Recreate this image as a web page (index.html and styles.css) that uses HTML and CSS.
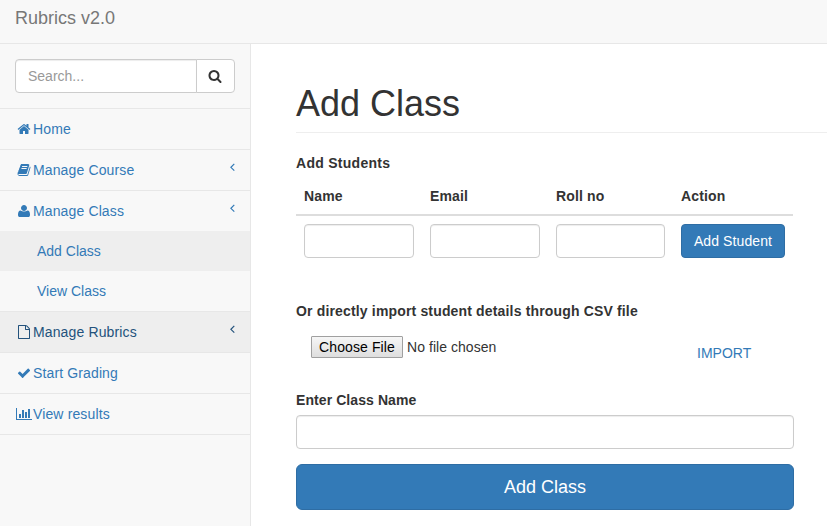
FILE: index.html
```html
<!DOCTYPE html>
<html lang="en">
<head>
<meta charset="utf-8">
<title>Rubrics v2.0</title>
<link rel="stylesheet" href="styles.css">
</head>
<body>
<header class="navbar"><a class="brand">Rubrics v2.0</a></header>
<div class="layout">
  <nav class="sidebar">
    <div class="search">
      <input class="search-input" type="text" placeholder="Search...">
      <button class="search-btn" aria-label="Search"><svg class="icon" viewBox="0 0 1792 1792"><path d="M1216 832q0-185-131.500-316.500t-316.500-131.500-316.500 131.500-131.500 316.500 131.500 316.500 316.500 131.500 316.500-131.500 131.500-316.500zm512 832q0 52-38 90t-90 38q-54 0-90-38l-343-342q-179 124-399 124-143 0-273.500-55.500t-225-150-150-225-55.500-273.500 55.500-273.500 150-225 225-150 273.500-55.500 273.500 55.500 225 150 150 225 55.500 273.500q0 220-124 399l343 343q37 37 37 90z"/></svg></button>
    </div>
    <a class="item"><span class="fw"><svg class="icon" viewBox="0 0 1792 1792"><path d="M1472 992v480q0 26-19 45t-45 19h-384v-384h-256v384h-384q-26 0-45-19t-19-45v-480q0-1 .5-3t.5-3l575-474 575 474q1 2 1 6zm223-69l-62 74q-8 9-21 11h-3q-13 0-21-7l-692-577-692 577q-12 8-24 7-13-2-21-11l-62-74q-8-10-7-23.500t11-21.500l719-599q32-26 76-26t76 26l244 204v-195q0-14 9-23t23-9h192q14 0 23 9t9 23v408l219 182q10 8 11 21.500t-7 23.500z"/></svg></span>Home</a>
    <a class="item"><span class="fw"><svg class="icon" viewBox="0 0 1792 1792"><path d="M1703 478q40 57 18 129l-275 906q-19 64-76.500 107.500t-122.500 43.500h-923q-77 0-148.500-53.500t-99.500-131.500q-24-67-2-127 0-4 3-27t4-37q1-8-3-21.500t-3-19.500q2-11 8-21t16.500-23.500 16.500-23.500q23-38 45-91.500t30-91.500q3-10 .5-30t-.5-28q3-11 17-28t17-23q21-36 42-92t25-90q1-9-2.500-32t.5-28q4-13 22-30.500t22-22.500q19-26 42.500-84.500t27.500-96.500q1-8-3-25.500t-2-26.500q2-8 9-18t18-23 17-21q8-12 16.500-30.500t15-35 16-36 19.500-32 26.500-23.500 36-11.500 47.500 5.500l-1 3q38-9 51-9h761q74 0 114 56t18 130l-274 906q-36 119-71.500 153.500t-128.500 34.500h-869q-27 0-38 15-11 16-1 43 24 70 144 70h923q29 0 56-15.500t35-41.500l300-987q7-22 5-57 38 15 59 43zm-1064 2q-4 13 2 22.500t20 9.500h608q13 0 25.500-9.500t16.500-22.500l21-64q4-13-2-22.500t-20-9.500h-608q-13 0-25.500 9.500t-16.500 22.500zm-83 256q-4 13 2 22.500t20 9.500h608q13 0 25.500-9.500t16.500-22.500l21-64q4-13-2-22.500t-20-9.500h-608q-13 0-25.500 9.500t-16.500 22.500z"/></svg></span>Manage Course<svg class="arrow" viewBox="0 0 5 9"><path d="M4.300 .9L.9 4.300l3.400 3.400"/></svg></a>
    <a class="item open"><span class="fw"><svg class="icon" viewBox="0 0 1792 1792"><path d="M1664 1399q0 109-62.500 187t-150.500 78h-1110q-88 0-150.500-78t-62.500-187q0-85 8.500-160.500t31.500-152 58.500-131 94-89 134.500-34.500q181 128 441 128t441-128q76 0 134.500 34.500t94 89 58.500 131 31.500 152 8.500 160.500zm-384-887q0 159-112.500 271.500t-271.500 112.500-271.500-112.500-112.500-271.500 112.500-271.500 271.500-112.500 271.500 112.500 112.500 271.500z"/></svg></span>Manage Class<svg class="arrow" viewBox="0 0 5 9"><path d="M4.300 .9L.9 4.300l3.400 3.400"/></svg></a>
    <div class="submenu">
      <a class="subitem active">Add Class</a>
      <a class="subitem">View Class</a>
    </div>
    <a class="item hover"><span class="fw"><svg class="icon" viewBox="0 0 1792 1792"><path d="M1596 380q28 28 48 76t20 88v1152q0 40-28 68t-68 28h-1344q-40 0-68-28t-28-68v-1600q0-40 28-68t68-28h896q40 0 88 20t76 48zm-444-244v376h376q-10-29-22-41l-313-313q-12-12-41-22zm384 1528v-1024h-416q-40 0-68-28t-28-68v-416h-768v1536h1280z"/></svg></span>Manage Rubrics<svg class="arrow" viewBox="0 0 5 9"><path d="M4.300 .9L.9 4.300l3.400 3.400"/></svg></a>
    <a class="item"><span class="fw"><svg class="icon" viewBox="0 0 1792 1792"><path d="M1671 566q0 40-28 68l-724 724-136 136q-28 28-68 28t-68-28l-136-136-362-362q-28-28-28-68t28-68l136-136q28-28 68-28t68 28l294 295 656-657q28-28 68-28t68 28l136 136q28 28 28 68z"/></svg></span>Start Grading</a>
    <a class="item"><span class="fw"><svg class="icon wide" viewBox="0 0 2048 1792"><path d="M640 896v512h-256v-512h256zm384-512v1024h-256v-1024h256zm1024 1152v128h-2048v-1536h128v1408h1920zm-640-896v768h-256v-768h256zm384-384v1152h-256v-1152h256z"/></svg></span>View results</a>
  </nav>
  <main class="page">
    <h1 class="title">Add Class</h1>
    <div class="form">
      <label class="label students-label">Add Students</label>
      <table class="students">
        <thead><tr><th class="name">Name</th><th class="email">Email</th><th class="roll">Roll no</th><th class="action">Action</th></tr></thead>
        <tbody><tr>
          <td><input class="control" type="text"></td>
          <td><input class="control" type="text"></td>
          <td><input class="control" type="text"></td>
          <td><button class="btn">Add Student</button></td>
        </tr></tbody>
      </table>
      <label class="label csv-label">Or directly import student details through CSV file</label>
      <div class="import-row">
        <div class="file"><button class="file-btn">Choose File</button><span class="file-name">No file chosen</span></div>
        <a class="import">IMPORT</a>
      </div>
      <label class="label class-label">Enter Class Name</label>
      <input class="control" type="text">
      <button class="btn btn-large">Add Class</button>
    </div>
  </main>
</div>
</body>
</html>
```
FILE: styles.css
```css
* { box-sizing: border-box; }
body {
  margin: 0;
  height: 526px;
  overflow: hidden;
  font: 14px/20px "Liberation Sans", Arial, sans-serif;
  color: #333;
  background: #f8f8f8;
}
input, button { font: inherit; margin: 0; }
.navbar {
  height: 44px;
  padding: 8px 15px 0;
  border-bottom: 1px solid #e7e7e7;
}
.brand { display: block; font-size: 18px; line-height: 20px; color: #777; }
.layout { display: flex; height: 482px; }
.sidebar { width: 250px; flex: none; }
.search {
  display: flex;
  height: 65px;
  padding: 15px;
  border-bottom: 1px solid #e7e7e7;
}
.search-input {
  width: 182px;
  height: 34px;
  padding: 6px 12px;
  border: 1px solid #ccc;
  border-radius: 4px 0 0 4px;
  box-shadow: inset 0 1px 1px rgba(0, 0, 0, .075);
}
.search-input::placeholder { color: #999; }
.search-btn {
  width: 39px;
  height: 34px;
  margin-left: -1px;
  padding: 0 1px 0 0;
  display: flex;
  align-items: center;
  justify-content: center;
  background: #fff;
  border: 1px solid #ccc;
  border-radius: 0 4px 4px 0;
  color: #333;
}
.icon { width: 14px; height: 14px; fill: currentColor; display: block; }
.icon.wide { width: 16px; }
.fw { width: 18px; display: flex; justify-content: center; }
.item {
  display: flex;
  align-items: center;
  height: 41px;
  padding: 0 15px;
  border-bottom: 1px solid #e7e7e7;
  color: #337ab7;
  letter-spacing: .13px;
}
.item.open { height: 40px; border-bottom: 0; }
.item.hover { background: #eee; color: #23527c; }
.arrow {
  width: 5px;
  height: 9px;
  margin: 0 0 5px auto;
  fill: none;
  stroke: currentColor;
  stroke-width: 1.2;
}
.submenu { border-bottom: 1px solid #e7e7e7; }
.subitem { display: block; height: 40px; padding: 10px 15px 10px 37px; color: #337ab7; }
.subitem.active { background: #eee; }
.page {
  flex: 1;
  padding: 40px 0 0 45px;
  background: #fff;
  border-left: 1px solid #e7e7e7;
}
.title {
  height: 49px;
  margin: 0 0 20px;
  font-size: 36px;
  line-height: 40px;
  font-weight: 400;
  border-bottom: 1px solid #eee;
}
.form { width: 498px; display: flex; flex-direction: column; }
.label { font-weight: 700; }
.students-label { letter-spacing: .28px; }
.students { width: 497px; border-collapse: collapse; table-layout: fixed; }
.students th {
  height: 42px;
  padding: 4px 8px 0;
  text-align: left;
  letter-spacing: .15px;
  border-bottom: 2px solid #ddd;
}
.students td { padding: 8px; vertical-align: top; }
.name, .email { width: 126px; }
.roll { width: 125px; }
.control {
  display: block;
  width: 100%;
  height: 34px;
  padding: 6px 12px;
  background: #fff;
  border: 1px solid #ccc;
  border-radius: 4px;
  box-shadow: inset 0 1px 1px rgba(0, 0, 0, .075);
}
.btn {
  display: block;
  width: 104px;
  height: 34px;
  padding: 0;
  white-space: nowrap;
  color: #fff;
  background: #337ab7;
  border: 1px solid #2e6da4;
  border-radius: 4px;
}
.students .btn { letter-spacing: .1px; }
.csv-label { margin-top: 35px; letter-spacing: .16px; }
.import-row { display: flex; height: 64px; padding: 15px 0 0 15px; }
.file { display: flex; width: 386px; height: 22px; }
.file-btn {
  width: 92px;
  height: 22px;
  padding: 0;
  line-height: 20px;
  letter-spacing: .1px;
  white-space: nowrap;
  color: #000;
  background: linear-gradient(#f6f6f6, #dedede);
  border: 1px solid #a0a0a0;
  border-radius: 1px;
}
.file-name { margin-left: 4px; line-height: 22px; letter-spacing: .05px; }
.import { margin-top: 7px; color: #337ab7; }
.class-label { margin: 5px 0; letter-spacing: .08px; }
.btn-large { width: 100%; height: 46px; margin-top: 15px; font-size: 18px; border-radius: 6px; }
```
